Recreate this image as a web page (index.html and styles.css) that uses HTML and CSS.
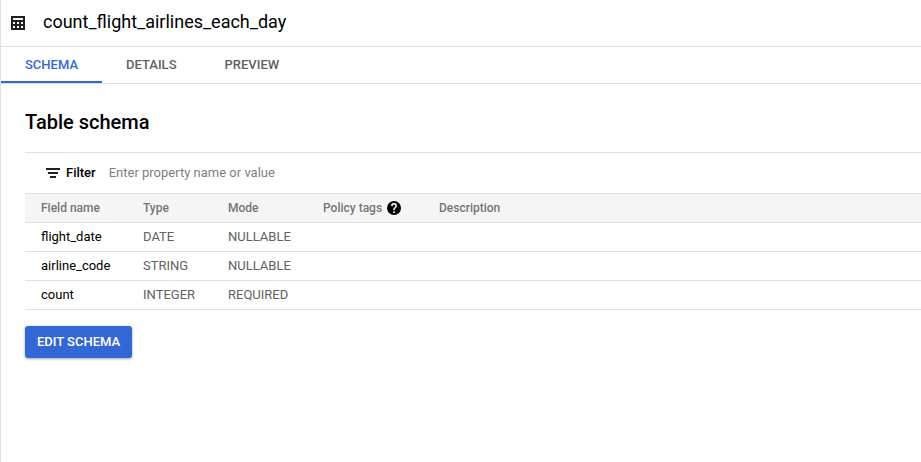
FILE: index.html
```html
<!DOCTYPE html>
<html lang="en">
<head>
<meta charset="utf-8">
<title>count_flight_airlines_each_day</title>
<link rel="stylesheet" href="styles.css">
</head>
<body>
<main class="panel">
  <header class="header">
    <svg class="table-icon" width="14" height="14" viewBox="0 0 14 14" fill="#212121"><path fill-rule="evenodd" d="M0 0h14v14H0zM2 2v2h10V2zM2 6v2h2V6zM6 6v2h2V6zM10 6v2h2V6zM2 10v2h2v-2zM6 10v2h2v-2zM10 10v2h2v-2z"/></svg>
    <h1 class="title">count_flight_airlines_each_day</h1>
  </header>
  <nav class="tabs">
    <a class="tab tab-active">SCHEMA</a>
    <a class="tab">DETAILS</a>
    <a class="tab">PREVIEW</a>
  </nav>
  <section class="content">
    <h2 class="heading">Table schema</h2>
    <div class="filter">
      <svg width="14" height="10" viewBox="0 0 14 10" fill="#212121"><path d="M0 0h14v2H0zM2 4h10v2H2zM4 8h6v2H4z"/></svg>
      <span class="filter-label">Filter</span>
      <span class="filter-hint">Enter property name or value</span>
    </div>
    <div class="row row-head">
      <span>Field name</span><span>Type</span><span>Mode</span>
      <span class="policy">Policy tags <svg width="14" height="14" viewBox="2 2 20 20"><circle cx="12" cy="12" r="10" fill="#000"/><path d="M13 19h-2v-2h2zM15.07 11.25l-.9.92C13.45 12.9 13 13.500 13 15h-2v-.5c0-1.100.45-2.100 1.170-2.830l1.240-1.260c.37-.36.59-.86.59-1.410a2 2 0 0 0-4 0H8a4 4 0 0 1 8 0c0 .88-.36 1.680-.93 2.250z" fill="#fff" stroke="#fff" stroke-width=".4"/></svg></span>
      <span>Description</span>
    </div>
    <div class="row"><span class="name">flight_date</span><span>DATE</span><span>NULLABLE</span></div>
    <div class="row"><span class="name">airline_code</span><span>STRING</span><span>NULLABLE</span></div>
    <div class="row"><span class="name">count</span><span>INTEGER</span><span>REQUIRED</span></div>
    <button class="edit">EDIT SCHEMA</button>
  </section>
</main>
</body>
</html>
```
FILE: styles.css
```css
* { box-sizing: border-box; }
body { margin: 0; background: #fff; font: 13px/20px Roboto, sans-serif; color: #000; overflow: hidden; }
.panel { height: 462px; border-left: 1px solid #e0e0e0; }
.header { height: 47px; padding: 0 0 3px 10px; display: flex; align-items: center; gap: 18px; border-bottom: 1px solid #e0e0e0; }
.table-icon { margin-top: 3px; }
.title { margin: 0; font-size: 18px; font-weight: 400; line-height: 24px; }
.tabs { height: 37px; display: flex; border-bottom: 1px solid #e0e0e0; }
.tab { height: 36px; padding: 0 24px; line-height: 36px; font-weight: 500; color: #616161; }
.tab-active { color: #3367d6; border-bottom: 2px solid #3367d6; }
.content { padding: 24px 0 0 24px; }
.heading { margin: 0 0 16px; font-size: 20px; line-height: 28px; font-weight: 500; }
.filter { height: 41px; padding-left: 21px; display: flex; align-items: center; border-top: 1px solid #e0e0e0; }
.filter-label { margin: 0 13px 0 6px; font-weight: 500; }
.filter-hint { color: #808080; }
.row { height: 29px; padding-left: 16px; display: grid; grid-template-columns: 102px 85px 95px 116px 1fr; align-items: center; border-bottom: 1px solid #e0e0e0; color: #616161; }
.row-head { height: 30px; border-top: 1px solid #e0e0e0; background: #f5f5f5; font-size: 12px; font-weight: 500; color: #757575; }
.policy { display: flex; align-items: center; gap: 5px; }
.name { color: #000; }
.edit { display: block; width: 107px; height: 32px; margin-top: 16px; padding: 0; border: 0; border-radius: 3px; background: #3367d6; color: #fff; font: 500 13px/32px Roboto, sans-serif; box-shadow: 0 1px 3px rgba(0,0,0,.35); }
```
